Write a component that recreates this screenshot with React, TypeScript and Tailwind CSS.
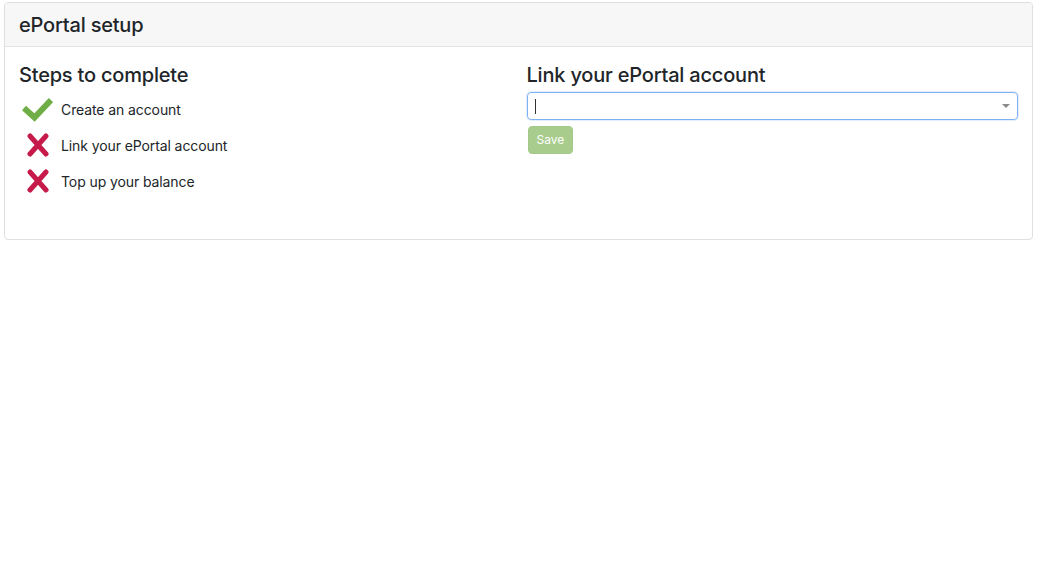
import React from "react";

const STEPS: { label: string; done: boolean }[] = [
  { label: "Create an account", done: true },
  { label: "Link your ePortal account", done: false },
  { label: "Top up your balance", done: false },
];

function Check() {
  return (
    <svg width="34" height="26" viewBox="0 0 34 26" className="shrink-0">
      <path d="M5 12 L15.5 21.5 L32 4" fill="none" stroke="#6fae46" strokeWidth="6" strokeLinecap="butt" strokeLinejoin="miter" />
    </svg>
  );
}

function Cross() {
  return (
    <svg width="34" height="24" viewBox="0 0 34 24" className="shrink-0">
      <path d="M11 3 L27 21 M27 3 L11 21" fill="none" stroke="#c51a4a" strokeWidth="5" strokeLinecap="round" />
    </svg>
  );
}

export default function App() {
  return (
    <div className="min-h-[569px] bg-white p-[2px_4px] font-['Inter',sans-serif] text-[#212529]">
      <div className="rounded-[4px] border border-[#dfdfdf]">
        <div className="flex h-[44px] items-center rounded-t-[4px] border-b border-[#e3e3e3] bg-[#f7f7f7] px-[14px]">
          <h1 className="text-[20px] font-medium tracking-[-0.2px]">ePortal setup</h1>
        </div>

        <div className="grid grid-cols-2 gap-x-[16px] px-[14px] pt-[16px] pb-[46px]">
          <div>
            <h2 className="text-[20px] font-medium leading-[24px] tracking-[-0.2px]">Steps to complete</h2>
            <ul className="mt-[10px] flex flex-col gap-[12px]">
              {STEPS.map((s) => (
                <li key={s.label} className="flex h-[24px] items-center gap-[8px] text-[14px] tracking-[-0.1px]">
                  {s.done ? <Check /> : <Cross />}
                  <span>{s.label}</span>
                </li>
              ))}
            </ul>
          </div>

          <div>
            <h2 className="text-[20px] font-medium leading-[24px] tracking-[-0.2px]">Link your ePortal account</h2>
            <div className="mt-[5px] flex h-[28px] items-center justify-between rounded-[4px] border border-[#7fb2f5] px-[7px] shadow-[0_0_0_1px_#e3eefc]">
              <span className="h-[15px] w-px bg-[#333]" />
              <span className="h-0 w-0 border-x-[4px] border-t-[4px] border-x-transparent border-t-[#8a8a8a]" />
            </div>
            <button
              disabled
              className="mt-[6px] ml-px h-[28px] rounded-[4px] border border-[#a3c98a] bg-[#a8cc8c] px-[8px] text-[12px] text-white"
            >
              Save
            </button>
          </div>
        </div>
      </div>
    </div>
  );
}
